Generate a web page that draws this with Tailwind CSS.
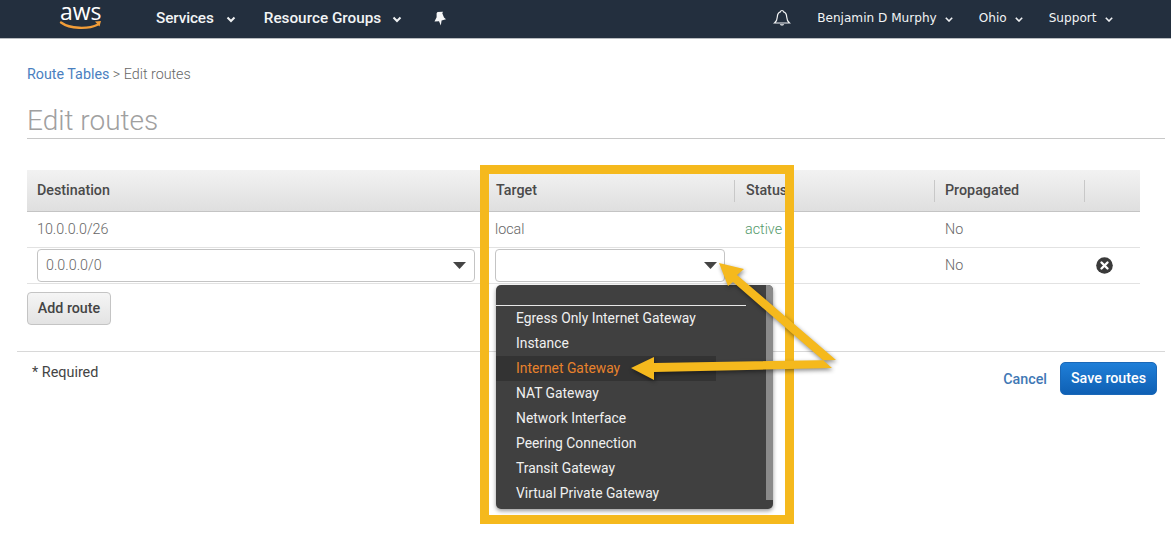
<!DOCTYPE html>
<html><head><meta charset="utf-8"><script src="https://cdn.jsdelivr.net/npm/@tailwindcss/browser@4"></script></head>
<body class="m-0 bg-white font-['Roboto',sans-serif] text-[14.300px] text-[#444]">
<div class="relative w-[1171px] h-[534px] overflow-hidden">
<header class="h-[39px] bg-[#232f3e] border-b border-[#b8bcc0] flex items-center text-[#f2f4f5]">
  <div class="w-[156px] h-full relative shrink-0">
    <span class="absolute left-[60px] -top-px text-[23px] leading-[24px] font-normal font-['Open_Sans',sans-serif] text-white">aws</span>
    <svg class="absolute left-[59px] top-[19px]" width="44" height="13" viewBox="0 0 44 13"><path d="M2 3.500C11 10 29 10.500 39 5.500" fill="none" stroke="#f29d38" stroke-width="2.400" stroke-linecap="round"/><path d="M36 2.500l6-.5-1.500 5.500z" fill="#f29d38"/></svg>
  </div>
  <span class="text-[15.300px] font-medium tracking-[-0.1px] -mt-[2px]">Services</span>
  <svg class="ml-[12px]" width="10" height="7" viewBox="0 0 10 7"><path d="M1.500 1.500L5 5l3.500-3.500" fill="none" stroke="#eef0f2" stroke-width="2"/></svg>
  <span class="ml-[28px] text-[15.300px] font-medium -mt-[2px]">Resource Groups</span>
  <svg class="ml-[11px]" width="10" height="7" viewBox="0 0 10 7"><path d="M1.500 1.500L5 5l3.500-3.500" fill="none" stroke="#eef0f2" stroke-width="2"/></svg>
  <svg class="ml-[31px] -mt-[2px]" width="14" height="15" viewBox="0 0 14 15"><path d="M4.500 1L10 .8 9.300 2.200 11 6.600 13 8.300 8.600 9.600 7.800 14.500 6 10.200 1.500 10.400 3.600 6.200 3.600 2.200z" fill="#f5f6f7"/></svg>
  <svg class="ml-[326px] -mt-[1px]" width="18" height="19" viewBox="0 0 18 19"><path d="M9 1.500c-1 0-1.500.6-1.600 1.300C5 3.500 4.400 5.500 4.300 8c-.1 3-1 4.600-2.800 6h15c-1.800-1.400-2.700-3-2.800-6-.1-2.500-.7-4.500-3.100-5.200C10.500 2.100 10 1.500 9 1.500z" fill="none" stroke="#f2f4f5" stroke-width="1.200"/><path d="M6.800 15.300c.4 1.700 4 1.700 4.400 0z" fill="#f2f4f5"/></svg>
  <span class="ml-[26px] font-['DejaVu_Sans',sans-serif] text-[12.100px] -mt-[1px]">Benjamin D Murphy</span>
  <svg class="ml-[8px]" width="8" height="5" viewBox="0 0 8 5"><path d="M.8.8L4 4 7.200.8" fill="none" stroke="#eef0f2" stroke-width="1.600"/></svg>
  <span class="ml-[26px] font-['DejaVu_Sans',sans-serif] text-[12.100px] -mt-[1px]">Ohio</span>
  <svg class="ml-[8px]" width="8" height="5" viewBox="0 0 8 5"><path d="M.8.8L4 4 7.200.8" fill="none" stroke="#eef0f2" stroke-width="1.600"/></svg>
  <span class="ml-[26px] font-['DejaVu_Sans',sans-serif] text-[12.100px] -mt-[1px]">Support</span>
  <svg class="ml-[8px]" width="8" height="5" viewBox="0 0 8 5"><path d="M.8.8L4 4 7.200.8" fill="none" stroke="#eef0f2" stroke-width="1.600"/></svg>
</header>

<main class="pl-[27px] pr-[6px]">
  <div class="pt-[26px] h-[53px] leading-[18px] font-light text-[#666]"><span class="text-[#4a7fbf] font-normal">Route Tables</span> &gt; Edit routes</div>
  <h1 class="h-[47px] border-b border-[#c8c8c8] text-[28px] leading-[36px] font-light text-[#a0a0a0] pt-[11px]">Edit routes</h1>
  <div class="mt-[31px] w-[1113px] grid grid-cols-[458px_250px_200px_150px_55px]">
    <div class="col-span-5 grid grid-cols-subgrid h-[42px] items-center bg-gradient-to-b from-[#f2f2f2] to-[#dfdfdf] border-b border-[#c4c4c4] text-[#4a4a4a] font-medium">
      <div class="pl-[10px] h-[22px] leading-[21px]">Destination</div>
      <div class="pl-[12px] h-[22px] leading-[21px] border-r border-[#c8c8c8] -ml-px">Target</div>
      <div class="pl-[11px] h-[22px] leading-[21px] border-r border-[#c8c8c8]">Status</div>
      <div class="pl-[10px] h-[22px] leading-[21px] border-r border-[#c8c8c8]">Propagated</div>
      <div></div>
    </div>
    <div class="col-span-5 grid grid-cols-subgrid h-[36px] items-center border-b border-[#e2e2e2] font-light text-[#666]">
      <div class="pl-[10px]">10.0.0.0/26</div>
      <div class="pl-[10px]">local</div>
      <div class="pl-[10px] text-[#55996a]">active</div>
      <div class="pl-[10px]">No</div>
      <div></div>
    </div>
    <div class="col-span-5 grid grid-cols-subgrid h-[36px] items-center border-b border-[#e2e2e2] font-light text-[#666]">
      <div class="pl-[10px] pr-[10px]">
        <div class="h-[33px] border border-[#c4c4c4] rounded-[4px] flex items-center justify-between pl-[8px] pr-[8px]"><span>0.0.0.0/0</span><svg width="13" height="7" viewBox="0 0 13 7"><path d="M0 0h13L6.500 7z" fill="#444"/></svg></div>
      </div>
      <div class="pl-[10px] pr-[10px]">
        <div class="h-[33px] border border-[#c4c4c4] rounded-[4px] flex items-center justify-end pr-[7px]"><svg width="13" height="7" viewBox="0 0 13 7"><path d="M0 0h13L6.500 7z" fill="#444"/></svg></div>
      </div>
      <div></div>
      <div class="pl-[10px]">No</div>
      <div class="pl-[11px]"><svg width="17" height="17" viewBox="0 0 17 17"><circle cx="8.500" cy="8.500" r="8.300" fill="#3a3a3a"/><path d="M5.500 5.500l6 6M11.500 5.500l-6 6" stroke="#fff" stroke-width="2.400" stroke-linecap="round"/></svg></div>
    </div>
  </div>
  <button class="mt-[8px] block h-[33px] w-[84px] rounded-[4px] border border-[#c4c4c4] bg-gradient-to-b from-[#f5f5f5] to-[#e3e3e3] font-medium text-[#444]">Add route</button>
  <div class="-ml-[10px] mt-[26px] border-t border-[#d8d8d8] h-[44px] flex justify-between">
    <div class="pl-[15px] pt-[12px] leading-[18px] text-[14.400px] text-[#444]">* Required</div>
    <div class="flex items-start pt-[10px] pr-[8px]">
      <span class="mt-[8px] text-[#3f78b5] font-medium leading-[18px]">Cancel</span>
      <button class="ml-[13px] h-[33px] w-[97px] rounded-[5px] bg-gradient-to-b from-[#1f7fd8] to-[#0f60b4] border border-[#1a68b8] text-white font-medium">Save routes</button>
    </div>
  </div>
</main>

<div class="absolute left-[496px] top-[285px] w-[277px] h-[224px] rounded-[5px] bg-[#404040] shadow-[0_2px_4px_rgba(0,0,0,0.4)] text-[#f0f0f0] text-[13.850px] overflow-hidden">
  <div class="absolute right-0 top-0 bottom-[9px] w-[7px] bg-[#8a8a8a]"></div>
  <div class="h-[21px] w-[250px] border-b border-[#e8e8e8]"></div>
  <ul>
    <li class="h-[25px] leading-[25px] pl-[20px]">Egress Only Internet Gateway</li>
    <li class="h-[25px] leading-[25px] pl-[20px]">Instance</li>
    <li class="h-[25px] leading-[25px] pl-[20px] w-[220px] bg-[#333333] text-[#e8822c]">Internet Gateway</li>
    <li class="h-[25px] leading-[25px] pl-[20px]">NAT Gateway</li>
    <li class="h-[25px] leading-[25px] pl-[20px]">Network Interface</li>
    <li class="h-[25px] leading-[25px] pl-[20px]">Peering Connection</li>
    <li class="h-[25px] leading-[25px] pl-[20px]">Transit Gateway</li>
    <li class="h-[25px] leading-[25px] pl-[20px]">Virtual Private Gateway</li>
  </ul>
</div>

<div class="absolute left-[480px] top-[165px] w-[314px] h-[359px] border-[9px] border-[#f5b91d]"></div>

<svg class="absolute left-0 top-0 pointer-events-none [filter:drop-shadow(1px_2px_2px_rgba(0,0,0,0.45))]" width="1171" height="534" viewBox="0 0 1171 534">
  <path d="M719 263L744 269 737 275 836 360 654 363 654 357 631 368 654 380 654 372 832 368 733 282 728 286z" fill="#f5b91d"/>
</svg>
</div>
</body></html>
